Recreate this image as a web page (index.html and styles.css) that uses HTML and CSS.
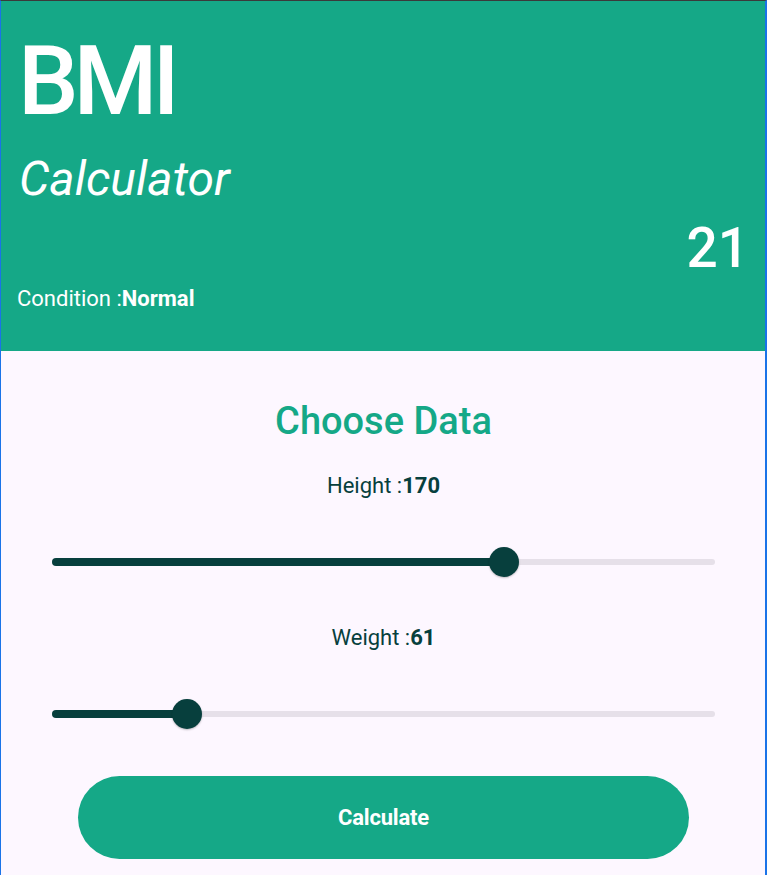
FILE: index.html
```html
<!DOCTYPE html>
<html>
<head>
<meta charset="utf-8">
<link rel="stylesheet" href="styles.css">
</head>
<body>
<div class="frame">
  <header class="hero">
    <div class="title">BMI</div>
    <div class="subtitle">Calculator</div>
    <div class="result">21</div>
    <div class="condition">Condition :<b>Normal</b></div>
  </header>
  <main class="content">
    <h2 class="heading">Choose Data</h2>
    <div class="label">Height :<b>170</b></div>
    <div class="slider">
      <div class="track"></div>
      <div class="active" style="width: 68.1%"></div>
      <div class="thumb" style="left: 68.1%"></div>
    </div>
    <div class="label">Weight :<b>61</b></div>
    <div class="slider">
      <div class="track"></div>
      <div class="active" style="width: 20.4%"></div>
      <div class="thumb" style="left: 20.4%"></div>
    </div>
    <button class="calc">Calculate</button>
  </main>
</div>
</body>
</html>
```
FILE: styles.css
```css
html, body {
  margin: 0;
  padding: 0;
  height: 100%;
}
body {
  font-family: Roboto, "Noto Sans", sans-serif;
  background: #fdf7ff;
}
.frame {
  box-sizing: border-box;
  height: 875px;
  border-top: 1px solid #3a3a3a;
  border-left: 1px solid #1a73e8;
  border-right: 2px solid #1a73e8;
  background: #fdf7ff;
  display: flex;
  flex-direction: column;
}
.hero {
  background: #15a887;
  color: #fff;
  height: 350px;
  flex: none;
  box-sizing: border-box;
  padding: 0 16px 0 16px;
  display: flex;
  flex-direction: column;
}
.title {
  font-size: 96px;
  line-height: 1;
  margin-top: 32px;
  margin-left: 1px;
  font-weight: 500;
  letter-spacing: -5px;
}
.subtitle {
  font-size: 48px;
  font-style: italic;
  line-height: 1;
  margin-top: 26px;
  margin-left: 2px;
}
.result {
  align-self: flex-end;
  font-size: 55px;
  font-weight: 500;
  line-height: 1;
  margin-top: 18px;
}
.condition {
  font-size: 22px;
  line-height: 1;
  margin-top: 12px;
}
.condition b {
  font-weight: 700;
}
.content {
  display: flex;
  flex-direction: column;
  align-items: center;
  padding: 0 50px 0 51px;
}
.heading {
  margin: 51px 0 0;
  font-size: 38px;
  font-weight: 500;
  color: #15a887;
  line-height: 1;
}
.label {
  margin-top: 35px;
  font-size: 22px;
  color: #073f3d;
  line-height: 1;
}
.label b {
  font-weight: 700;
}
.slider + .label {
  margin-top: 50px;
}
.slider {
  position: relative;
  align-self: stretch;
  height: 30px;
  margin-top: 50px;
}
.track {
  position: absolute;
  left: 0;
  right: 0;
  top: 12px;
  height: 6px;
  border-radius: 3px;
  background: #e6e0e9;
}
.active {
  position: absolute;
  left: 0;
  top: 11px;
  height: 8px;
  border-radius: 4px;
  background: #073f3d;
}
.thumb {
  position: absolute;
  top: 0;
  width: 30px;
  height: 30px;
  margin-left: -15px;
  border-radius: 50%;
  background: #073f3d;
  box-shadow: 0 1px 2px rgba(0,0,0,0.25);
}
.calc {
  margin-top: 47px;
  width: 611px;
  height: 83px;
  border: none;
  border-radius: 42px;
  background: #15a887;
  color: #fff;
  font-family: Roboto, "Noto Sans", sans-serif;
  font-size: 22px;
  font-weight: 700;
  letter-spacing: -0.2px;
}
```
